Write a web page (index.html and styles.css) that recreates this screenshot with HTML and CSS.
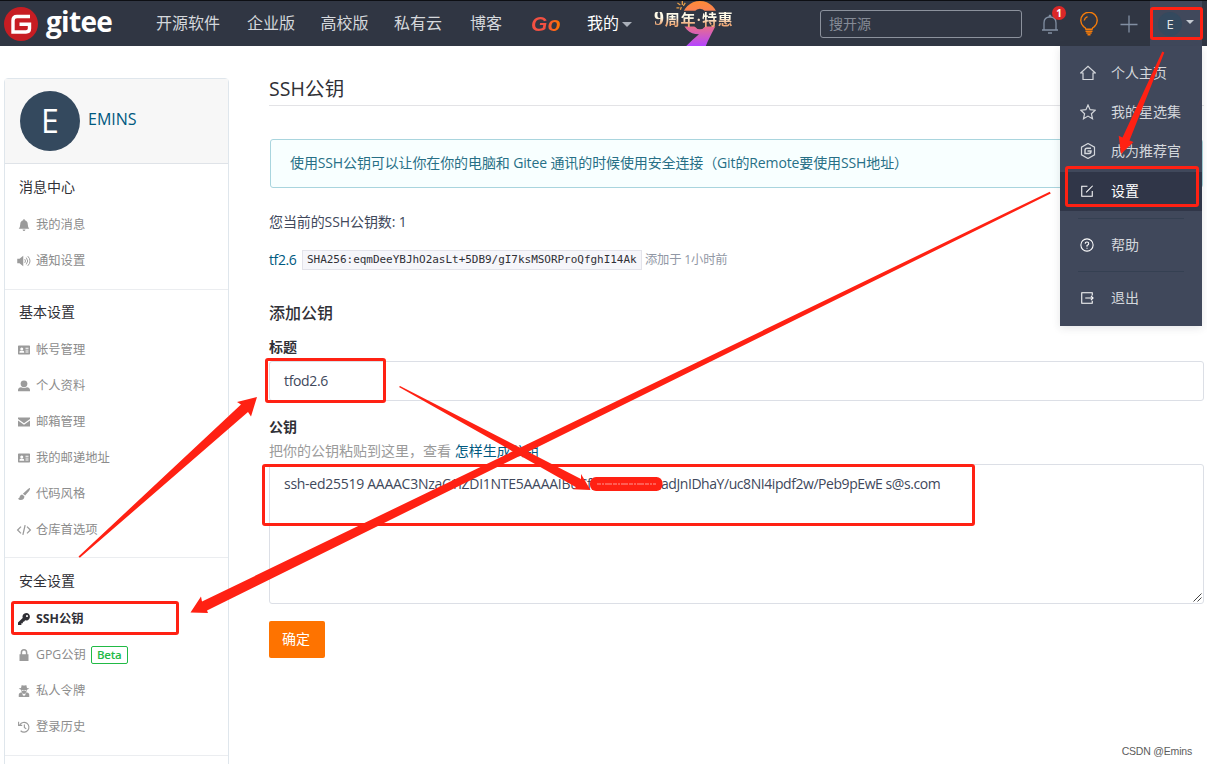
FILE: index.html
```html
<!DOCTYPE html>
<html lang="zh-CN">
<head>
<meta charset="utf-8">
<title>SSH公钥 - Gitee</title>
<link rel="stylesheet" href="styles.css">
</head>
<body>
<svg width="0" height="0" class="defs" aria-hidden="true">
  <symbol id="card" viewBox="0 0 16 16"><path fill="currentColor" fill-rule="evenodd" d="M1 2h14a1 1 0 0 1 1 1v10a1 1 0 0 1-1 1H1a1 1 0 0 1-1-1V3a1 1 0 0 1 1-1zM5 4.500a2 2 0 1 0 .01 0zM2 11.500h6.200V10.500Q8 9 6.500 9h-3Q2 9 2 10.500zM10 5h4v1.300h-4zM10 7.500h4v1.300h-4zM10 10h4v1.300h-4z"/></symbol>
</svg>
<header class="topbar">
  <a class="brand">
    <svg class="mark" viewBox="0 0 34 34"><circle cx="17" cy="17" r="17" fill="#c71d23"/><path d="M26 9.500H13Q9 9.500 9 13.500V25H22Q25.500 25 25.500 21.500V17.300H15.500" fill="none" stroke="#fff" stroke-width="3.400"/></svg>
    <span class="wordmark">gitee</span>
  </a>
  <nav class="nav">
    <a class="n1">开源软件</a><a class="n2">企业版</a><a class="n3">高校版</a><a class="n4">私有云</a><a class="n5">博客</a>
    <a class="go">Go</a><a class="mine">我的<i class="caret"></i></a>
  </nav>
  <div class="promo">
    <svg class="nine" viewBox="0 0 44 46"><defs><linearGradient id="ng" x1="0" y1="0" x2="0" y2="1"><stop offset="0" stop-color="#ff8b35"/><stop offset=".5" stop-color="#f0747a"/><stop offset="1" stop-color="#b445ff"/></linearGradient></defs><path fill="url(#ng)" fill-rule="evenodd" d="M25 0C35 0 43 8 43 17C43 25 36 33 31 46H11Q18 39 24 34C14 34 7 27 7 17C7 8 15 0 25 0zM25 8A8 10.500 0 1 0 25 29A8 10.500 0 1 0 25 8z"/><path fill="#303643" d="M0 10h44v16H0z"/><path d="M2 2l3 2M7 0v4M1 7h3M10 2L8 5M5 9l1-3" stroke="#e8a04a" stroke-width="1.300"/></svg>
    <span>9周年·特惠</span>
  </div>
  <div class="search">搜开源</div>
  <div class="tools">
    <div class="bell"><svg viewBox="0 0 18 22"><path d="M1 17h16M3 17V10Q3 4 9 4Q15 4 15 10V17M8 3.500Q9 1 10 3.500M7 20h4" fill="none" stroke="#8290a3" stroke-width="1.300"/></svg><b>1</b></div>
    <svg class="bulb" viewBox="0 0 20 24"><path d="M7 17.300Q6.800 15.800 4.600 14.600A8.200 8.200 0 1 1 15.400 14.600Q13.200 15.800 13 17.300zM6.500 19.200h7M7.300 21h5.400M8.500 22.700h3M5.200 8.500Q5.700 5.600 8.500 4.600" fill="none" stroke="#f57c0a" stroke-width="1.400"/></svg>
    <svg class="plus" viewBox="0 0 18 18"><path d="M9 0.500v17M.5 9.500h17" stroke="#8290a3" stroke-width="1.300"/></svg>
    <div class="account"><span>E</span><i class="caret"></i></div>
  </div>
</header>

<div class="page">
  <aside class="side">
    <div class="profile"><span class="avatar">E</span><a>EMINS</a></div>
    <section>
      <h4>消息中心</h4>
      <a><svg viewBox="0 0 16 16"><path fill="currentColor" d="M8 0q1 0 1 1.500Q13 2.500 13 7q0 3.500 2 6H1q2-2.500 2-6 0-4.500 4-5.500Q7 0 8 0zM6 14h4q-.5 2-2 2t-2-2z"/></svg>我的消息</a>
      <a><svg viewBox="0 0 16 16"><path fill="currentColor" d="M-1 5h3l5-4v14l-5-4h-3z"/><path d="M9 5.500q2 2.500 0 5M11 3.500q4 4.500 0 9M13 1.500q6 6.500 0 13" fill="none" stroke="currentColor" stroke-width="1.300"/></svg>通知设置</a>
    </section>
    <section class="basic">
      <h4>基本设置</h4>
      <a><svg><use href="#card"/></svg>帐号管理</a>
      <a><svg viewBox="0 0 16 16"><circle cx="8" cy="5" r="4.500" fill="currentColor"/><path fill="currentColor" d="M0 15v-1.500Q0 10 4 9.500q4 2 8 0 4 .5 4 4V15z"/></svg>个人资料</a>
      <a><svg viewBox="0 0 16 16"><path fill="currentColor" d="M0 2h16v2L8 9.500 0 4zM0 6l8 5.500L16 6v8H0z"/></svg>邮箱管理</a>
      <a><svg><use href="#card"/></svg>我的邮递地址</a>
      <a><svg viewBox="0 0 16 16"><path fill="currentColor" d="M16 0q.5 1-1 3.500L9.500 10 6.500 7.500 13 1.500Q15 0 16 0zM5.500 8.500l3 2.500q0 5-5 5-2.500 0-3.500-2 2 0 2.500-3 1-2.500 3-2.500z"/></svg>代码风格</a>
      <a><svg viewBox="0 0 16 16"><path d="M4 3.500L-.5 8 4 12.500M12 3.500L16.500 8 12 12.500M9.500 1.500l-3 13" fill="none" stroke="currentColor" stroke-width="1.700"/></svg>仓库首选项</a>
    </section>
    <section>
      <h4>安全设置</h4>
      <a class="active"><svg viewBox="0 0 16 16"><path fill="currentColor" fill-rule="evenodd" d="M11 0a5 5 0 1 1-1.500 9.800L8 11.500H6.500v2H4.500V16H0v-3.500L6.200 6.500A5 5 0 0 1 11 0zM12 2.700a1.400 1.400 0 1 0 .01 0z"/></svg>SSH公钥</a>
      <a><svg viewBox="0 0 16 16"><path fill="currentColor" d="M2 7h12v9H2z"/><path d="M4.500 8V5q0-4 3.500-4t3.500 4v3" fill="none" stroke="currentColor" stroke-width="2"/></svg>GPG公钥<em>Beta</em></a>
      <a><svg viewBox="0 0 16 16"><path fill="currentColor" fill-rule="evenodd" d="M5 0q3 1.500 6 0l1 4q2 .3 3 1-2 1-3 1.200 0 3-2 3.300Q15 10 15 13v3H1v-3Q1 10 6 9.500q-2-.3-2-3.300Q3 6 1 5q1-.7 3-1zM5 6.500h2.500v1H5zM8.500 6.500H11v1H8.500zM5.500 11l1.500 4 1-2 1 2 1.500-4-2.500 1z"/></svg>私人令牌</a>
      <a><svg viewBox="0 0 16 16"><path d="M2.500 5A6.500 6.500 0 1 1 3.500 13M.8 1v4.800h4.800M8.500 4.500V8.500l2.500 2" fill="none" stroke="currentColor" stroke-width="1.500"/></svg>登录历史</a>
    </section>
  </aside>

  <main class="main">
    <h1>SSH公钥</h1>
    <div class="notice">使用SSH公钥可以让你在你的电脑和 Gitee 通讯的时候使用安全连接（Git的Remote要使用SSH地址）</div>
    <p class="count">您当前的SSH公钥数: 1</p>
    <div class="key"><a>tf2.6</a><code>SHA256:eqmDeeYBJhO2asLt+5DB9/gI7ksMSORProQfghI14Ak</code><span>添加于 1小时前</span></div>
    <h2>添加公钥</h2>
    <label>标题</label>
    <div class="field">tfod2.6</div>
    <label class="second">公钥</label>
    <p class="hint">把你的公钥粘贴到这里，查看 <a>怎样生成公钥</a></p>
    <div class="field area"><span class="head">ssh-ed25519 AAAAC3NzaC1lZDI1NTE5AAAAIBuCf</span><span class="tail">adJnIDhaY/uc8NI4ipdf2w/Peb9pEwE s@s.com</span>
      <svg class="grip" viewBox="0 0 9 9"><path d="M.5 8.500l8-8M4.500 8.500l4-4" stroke="#444" stroke-width="1"/></svg>
    </div>
    <button>确定</button>
  </main>
</div>

<div class="menu">
  <a><svg viewBox="0 0 16 16"><path d="M.7 8L8 1.200 15.300 8H13v6.500H3V8z"/></svg>个人主页</a>
  <a><svg viewBox="0 0 16 16"><path d="M8 1l2.100 4.700 5.100.5-3.800 3.500 1.100 5L8 12.100l-4.500 2.600 1.100-5L.8 6.200l5.100-.5z"/></svg>我的星选集</a>
  <a><svg viewBox="0 0 16 16"><path d="M8 .5l6.500 3.700v7.600L8 15.500l-6.500-3.700V4.200z"/><path d="M11 5.300H7Q5 5.300 5 7.500v3h4q2 0 2-2.500H7.500" stroke-width="1.500"/></svg>成为推荐官</a>
  <a class="on"><svg viewBox="0 0 16 16"><path d="M8.500 2.500H2V14h12V8M7 9.500L14.500 2"/></svg>设置</a>
  <hr>
  <a class="low"><svg viewBox="0 0 16 16"><circle cx="8" cy="8" r="7"/><path d="M6 6.500Q6 4.500 8 4.500T10 6.500Q10 7.500 8 8.500V10M8 11v1.200"/></svg>帮助</a>
  <hr>
  <a class="low"><svg viewBox="0 0 16 16"><path d="M14 5V2H2v12h12V11M6 8h9M12.500 5.500l2.500 2.500-2.500 2.500"/></svg>退出</a>
</div>

<svg class="marks" viewBox="0 0 1207 764">
  <g fill="none" stroke="#ff2113" stroke-width="3">
    <rect x="1151.500" y="8.500" width="50" height="30" rx="1.500"/>
    <rect x="1066.500" y="167.500" width="131" height="38" rx="1.500"/>
    <rect x="12.500" y="602.500" width="165" height="31" rx="1.500"/>
    <rect x="266.500" y="359.500" width="118" height="42" rx="1.500"/>
    <rect x="263.500" y="465.500" width="710" height="59" rx="1.500"/>
  </g>
  <g fill="#ff2113">
    <path d="M1049.700 191.800L1050.800 193.500 207 610.500 208 613 190.500 612.500 201 596.500 202 601.500Z"/>
    <path d="M78.500 556.500L79.800 557.800 248 412 251 416.500 257 397 237 402 241 404.500Z"/>
    <path d="M399 387L400 386 581 479 581 474 590.500 490 573 489.300 576.500 487.500Z"/>
    <path d="M1162.300 51.500L1164.300 52.500 1129.500 140.500 1133.500 142 1121 154 1118.700 135.800 1122.500 137.500Z"/>
    <rect x="590" y="477" width="72.500" height="14" rx="6"/>
  </g>
  <path d="M597 484H656" stroke="#fff" stroke-opacity=".55" stroke-dasharray="4 1 2 1 7 1"/>
</svg>
<div class="credit">CSDN @Emins</div>
</body>
</html>
```
FILE: styles.css
```css
* { box-sizing: border-box; }
body { margin: 0; position: relative; width: 1207px; height: 764px; overflow: hidden; background: #fff; color: #40485b; font: 14px/20px "Open Sans", "Noto Sans CJK SC", sans-serif; }
h1, h2, h4, p { margin: 0; font-weight: 400; }
.defs { position: absolute; }

.topbar { display: flex; align-items: center; height: 46px; background: #303643; border-top: 1px solid #0d0f14; }
.brand { display: flex; align-items: center; width: 156px; padding-left: 4px; }
.mark { width: 34px; height: 34px; }
.wordmark { margin: -6px 0 0 8px; color: #fff; font-size: 28px; font-weight: 700; line-height: 38px; letter-spacing: -.7px; }
.nav { display: flex; width: 498px; color: #d5d8dc; font-size: 16px; line-height: 24px; white-space: nowrap; }
.n1 { width: 91px; }
.n2, .n3 { width: 73.500px; }
.n4 { width: 76px; }
.n5 { width: 61px; }
.go { width: 56px; font: italic 700 21px/25px "Liberation Sans", sans-serif; letter-spacing: .3px; background: linear-gradient(90deg, #f25042 50%, #fe7300 95%); background-size: 30px 100%; background-clip: text; -webkit-background-clip: text; -webkit-text-fill-color: transparent; }
.mine { color: #fff; }
.caret { display: inline-block; margin-left: 3px; border: 5px solid transparent; border-top-color: #aab0ba; border-bottom: 0; vertical-align: 2px; }
.promo { position: relative; width: 166px; height: 45px; font: 700 15px/35px "Liberation Serif", "Noto Sans CJK SC", serif; }
.promo span { position: relative; white-space: nowrap; letter-spacing: .75px; color: transparent; background: linear-gradient(#fffbe9 35%, #efaa78 75%); background-clip: text; -webkit-background-clip: text; }
.promo::first-letter { font-size: 20px; }
.nine { position: absolute; left: 21px; top: 0; width: 44px; height: 45px; }
.search { width: 202px; height: 28px; padding-left: 8px; border: 1px solid #8c929d; border-radius: 3px; color: #858b96; line-height: 25px; }
.tools { display: flex; align-items: center; padding-left: 19px; }
.bell { position: relative; width: 38px; height: 22px; }
.bell svg { width: 18px; height: 22px; }
.bell b { position: absolute; left: 11px; top: -7px; width: 14px; height: 14px; border-radius: 50%; background: #db2828; color: #fff; font-size: 10px; line-height: 14px; text-align: center; }
.bulb { width: 20px; height: 24px; }
.plus { width: 18px; height: 18px; margin-left: 21px; }
.account { display: flex; align-items: center; width: 52px; height: 45px; margin-left: 12px; padding-left: 8px; background: #40485b; }
.account span { width: 24px; height: 24px; border-radius: 50%; background: #34495e; color: #e5e7ea; font-size: 13px; line-height: 24px; text-align: center; }
.account .caret { margin: -3px 0 0 4px; border-width: 4px 4px 0; border-top-color: #c5cad2; }

.page { display: flex; padding-left: 4px; }
.side { width: 225px; height: 694px; margin-top: 32px; border: 1px solid #dfe6ec; border-radius: 4px 4px 0 0; }
.profile { display: flex; align-items: center; height: 85px; padding-left: 15px; background: #f7f7f7; border-bottom: 1px solid #dfe3e8; color: #005980; font-size: 16px; letter-spacing: 0; }
.profile a { margin: -5px 0 0 8px; }
.avatar { width: 60px; height: 60px; border-radius: 50%; background: #34495e; color: #fff; font-size: 32px; line-height: 60px; text-align: center; }
.side section { display: flex; flex-direction: column; padding: 4px 0 10px 14px; border-bottom: 1px solid #ebedf0; }
.side .basic { padding: 3px 0 9px 14px; }
.side h4 { margin-bottom: 1px; color: #303036; line-height: 38px; }
.side section a { display: flex; align-items: center; height: 36px; margin-left: -1px; color: #8c8c8c; font-size: 12.300px; }
.side section svg { width: 12px; height: 12px; margin-right: 6px; color: #9b9b9b; overflow: visible; }
.side .active, .side .active svg { color: #303036 !important; font-weight: 700; letter-spacing: 0; }
.side em { margin-left: 5px; padding: 0 5px; border: 1px solid #21ba45; border-radius: 2px; color: #21ba45; font-style: normal; font-weight: 600; font-size: 11.500px; line-height: 16px; letter-spacing: -.2px; }

.main { display: flex; flex-direction: column; width: 935px; margin: 28px 0 0 40px; }
h1 { height: 32px; border-bottom: 1px solid #e3e3e6; color: #303036; font-size: 19.500px; line-height: 29px; letter-spacing: .1px; }
.notice { height: 49px; margin: 33px 1px 0; padding-left: 19px; border: 1px solid #a9d5de; border-radius: 3px; background: #f8ffff; color: #276f86; line-height: 46px; letter-spacing: -.12px; }
.count { margin-top: 24px; letter-spacing: -.1px; }
.key { display: flex; align-items: center; height: 20px; margin-top: 18px; color: #005980; }
.key a { width: 33px; letter-spacing: -.4px; }
code { height: 20px; width: 340px; padding-left: 4px; border: 1px solid #e3e3ea; background: #f6f6fa; color: #303036; font: 11px/18px "DejaVu Sans Mono", monospace; letter-spacing: -.03px; white-space: nowrap; }
.key span { margin-left: 3px; color: #9198a5; font-size: 12.300px; letter-spacing: -.2px; }
h2 { margin-top: 31px; color: #303036; font-size: 16px; font-weight: 500; line-height: 24px; }
label { margin-top: 12px; color: #303036; font-weight: 700; line-height: 20px; }
.second { margin-top: 16px; }
.field { height: 40px; margin-top: 4px; padding-left: 14px; border: 1px solid #dcdfe6; border-radius: 3px; color: #40485b; line-height: 38px; letter-spacing: -.35px; }
.hint { margin-top: 4px; color: #9b9b9b; }
.hint a { color: #005980; }
.area { position: relative; display: flex; height: 140px; margin-top: 3px; white-space: nowrap; }
.head { width: 377px; letter-spacing: -.27px; }
.tail { letter-spacing: -.44px; }
.grip { position: absolute; right: 1px; bottom: 1px; width: 9px; height: 9px; }
button { width: 56px; height: 37px; margin-top: 17px; padding: 0 2px 2px 0; border: 0; border-radius: 2px; background: #fe7300; color: #fff; font: inherit; }

.menu { position: absolute; left: 1060px; top: 46px; width: 142px; height: 280px; padding-top: 8px; background: #40485b; color: #d4d7dc; box-shadow: 0 2px 8px #30364320; }
.menu a { display: flex; align-items: center; height: 39px; padding: 0 0 2px 20px; }
.menu svg { width: 16px; height: 16px; margin-right: 15px; fill: none; stroke: #d4d7dc; stroke-width: 1.200; }
.menu .on { margin-top: 1px; background: #303648; color: #fff; }
.menu .low { padding-bottom: 0; }
.menu .on svg, .menu .low svg { width: 14px; height: 14px; margin-right: 17px; stroke: #fff; }
.menu hr { height: 1px; margin: 7px 18px 6px; border: 0; background: #354052; }
.marks { position: absolute; left: 0; top: 0; width: 1207px; height: 764px; }
.credit { position: absolute; right: 15px; top: 743px; color: #5c5c5c; font: 10.500px/16px "Liberation Sans", sans-serif; letter-spacing: -.2px; }
```
